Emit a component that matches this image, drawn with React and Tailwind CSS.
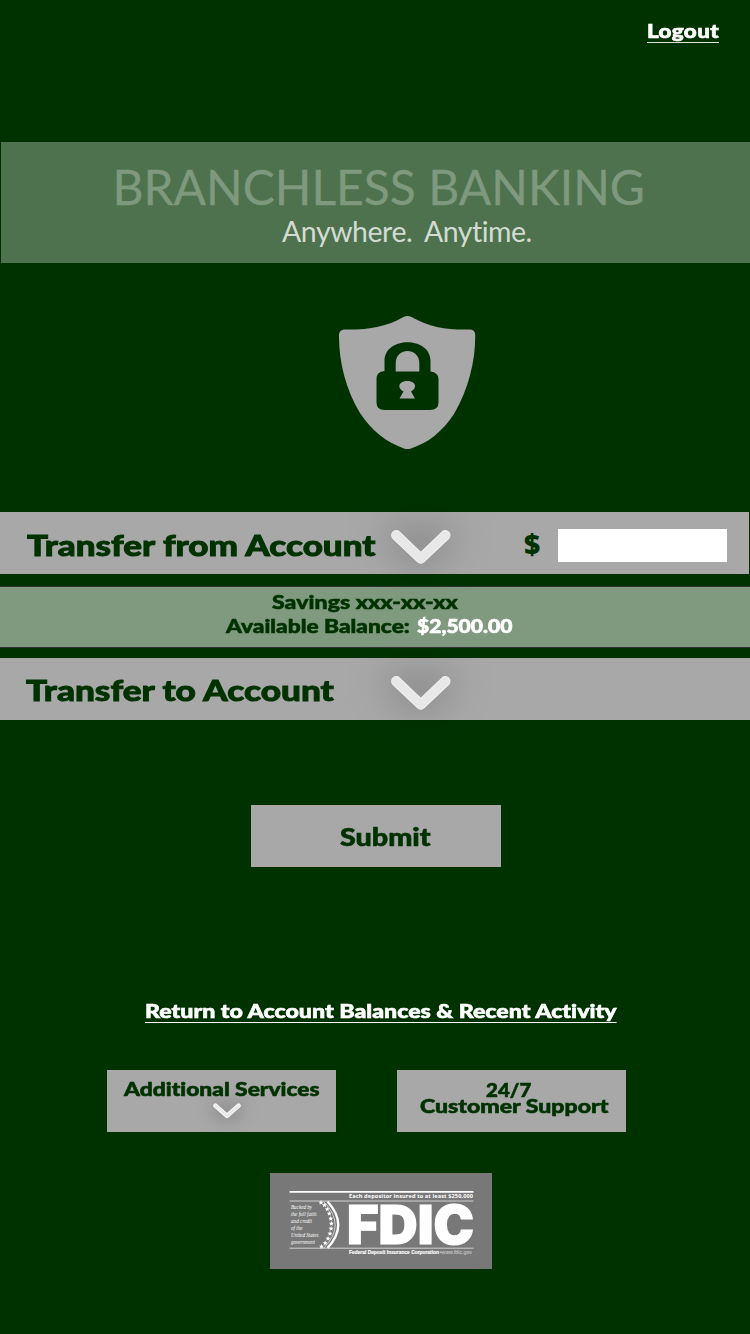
import React from 'react';

function Chevron({ className, small }) {
  return small ? (
    <svg className={className} viewBox="0 0 28 16" fill="none" strokeLinecap="round" strokeLinejoin="round">
      <path d="M2.4 2.6L14 12.9L25.6 2.6" stroke="#fafafa" strokeWidth="4.4" />
      <path d="M2.4 2.6L14 12.9L25.6 2.6" stroke="#e8e8e8" strokeWidth="2.4" />
    </svg>
  ) : (
    <svg className={className} viewBox="0 0 60 34" fill="none" strokeLinecap="round" strokeLinejoin="round">
      <path d="M5.2 5.2L29.8 28.6L54.4 5.2" stroke="#f3f3f3" strokeWidth="10.2" />
      <path d="M5.2 5.2L29.8 28.6L54.4 5.2" stroke="#e8e8e8" strokeWidth="8.6" />
    </svg>
  );
}

function Shield() {
  return (
    <svg className="ml-[339px] h-[134px] w-[137px]" viewBox="0 0 137 134">
      <path fill="#a8a8a8" d="M64.5 1Q68.5-1 72.5 1C91 11.5 108 14 131.5 13.5Q136.2 14 136.2 19C136.5 44 130 72 115 98C103 116 89 127 72 132.4Q68.5 133.6 65 132.4C47 126 33 115 21 97C6 72-.3 44 0 18.5Q.5 14 5 13.5C29 14 47 11 64.5 1Z" />
      <path fill="#003200" d="M45.5 55V45C45.5 20 91.5 20 91.5 45V55.5Q99.5 56.5 99.5 63V86.5Q99.5 94 91 94H45.5Q37.5 94 37.5 86.5V63Q37.5 55.5 45.5 55Z" />
      <path fill="#a8a8a8" d="M56.7 55.5V47C56.7 31 80.3 31 80.3 47V55.5Z" />
      <path fill="#a8a8a8" d="M64.5 75.5C57.5 71.5 60 65 68.2 65C76.5 65 79 71.5 72 75.5L76 82.5H60.5Z" />
    </svg>
  );
}

const stars = [
  [51, 29.5], [54.5, 32], [57.3, 36], [59.3, 40.5], [60.8, 45.5], [61.4, 50.5],
  [61.1, 55.5], [60, 60.5], [58, 65.5], [55.2, 70], [51.5, 73.5],
];
const motto = [
  ['Backed by', 35.5, 21], ['the full faith', 42.7, 25.5], ['and credit', 49.8, 21],
  ['of the', 57, 11.5], ['United States', 64, 27.5], ['government', 71.2, 24],
];

function Fdic() {
  return (
    <svg className="ml-[270px] block h-24 w-[222px] bg-[#787878] font-normal" viewBox="0 0 222 96" fill="#fff">
      <path d="M19.5 18.8H203.5" stroke="#fff" strokeWidth="1.7" />
      <path d="M19.5 28H203.5M19.5 75.2H203.5" stroke="#d0d0d0" strokeWidth="1" />
      <text x="79" y="24.8" fontSize="5.6" fontWeight="700" textLength="124" className="font-['Open_Sans',sans-serif]">Each depositor insured to at least $250,000</text>
      <g className="font-['Liberation_Serif',serif]" fontStyle="italic" fontSize="6.3">
        {motto.map(([t, y, w]) => <text key={t} x="21" y={y} textLength={w} lengthAdjust="spacingAndGlyphs">{t}</text>)}
      </g>
      <path d="M57.5 28.5Q79 52 57.5 75" fill="none" stroke="#fff" strokeWidth="2.3" />
      <path d="M53.8 28.5Q76.5 52 53.8 75" fill="none" stroke="#e5e5e5" strokeWidth=".8" />
      {stars.map(([x, y]) => (
        <path key={y} transform={`translate(${x} ${y})`} d="M0-2.5L.7-.8L2.5-.7L1.1.5L1.6 2.2L0 1.2L-1.6 2.2L-1.1.5L-2.5-.7L-.7-.8Z" />
      ))}
      <text x="77" y="71" fontSize="53" fontWeight="900" textLength="127" lengthAdjust="spacingAndGlyphs" stroke="#fff" strokeWidth="1.2" className="font-[Inter,sans-serif]">FDIC</text>
      <text x="79" y="81.4" fontSize="5.2" fontWeight="700" textLength="90" lengthAdjust="spacingAndGlyphs" stroke="#fff" strokeWidth=".15" className="font-['Liberation_Sans',sans-serif]">Federal Deposit Insurance Corporation</text>
      <text x="169.5" y="81.4" fontSize="5.2" fill="#d8d8d8" textLength="32.5" lengthAdjust="spacingAndGlyphs" className="font-['Liberation_Sans',sans-serif]">•www.fdic.gov</text>
    </svg>
  );
}

export default function App() {
  return (
    <div className="h-[1334px] w-[750px] overflow-hidden bg-[#003200] font-['Lato',sans-serif] text-[19.5px] leading-6 font-black whitespace-nowrap text-[#003200] [-webkit-text-stroke:0.6px] [font-variant-ligatures:none]">
      <header className="h-[142px] pt-[19px] pl-[646.5px]">
        <a className="inline-block origin-left scale-x-[1.18] text-[19px] tracking-[0.3px] text-white underline decoration-[#dbe3db] decoration-[1px] underline-offset-[4px] [text-decoration-skip-ink:none]">Logout</a>
      </header>

      <section className="ml-px h-[121px] bg-[#4d724d] pt-[21px] font-normal [-webkit-text-stroke:0px]">
        <h1 className="pl-[111.5px] text-[48px] leading-[48px] text-[#7f997f] [-webkit-text-stroke:0.3px]">BRANCHLESS BANKING</h1>
        <p className="mt-[3.5px] flex pl-[281px] text-[28.5px] leading-8 text-[#d3dcd3]">
          <span className="w-[142px] tracking-[-0.45px]">Anywhere.</span>
          <span className="tracking-[-0.5px]">Anytime.</span>
        </p>
      </section>

      <div className="h-[249px] pt-[53px]"><Shield /></div>

      <div className="relative flex h-[62px] w-[749px] bg-[#a8a8a8]">
        <div className="w-[363px] pt-[13px] pl-[27px] text-[28.5px] leading-10 [-webkit-text-stroke:0.9px]"><span className="inline-block origin-left scale-x-[1.229]">Transfer from Account</span></div>
        <Chevron className="mt-[18px] ml-7 h-[34px] w-[60px] drop-shadow-[-1px_-3px_20px_rgba(0,0,0,0.5)]" />
        <span className="ml-[73px] w-[34px] pt-3 font-['Open_Sans',sans-serif] text-[28px] leading-10 font-extrabold [-webkit-text-stroke:0px]">$</span>
        <input className="mt-[17px] h-[33px] w-[169px] bg-white px-2 outline-none" aria-label="Amount" />
      </div>

      <div className="mt-3 h-[62px] border-y border-[#333333] bg-[#809a80] pt-[2.5px]">
        <p className="pl-[272px]"><span className="inline-block origin-left scale-x-[1.18] tracking-[0.06px]">Savings xxx-xx-xx</span></p>
        <p className="flex pl-[226px]">
          <span className="w-[190.5px]"><span className="inline-block origin-left scale-x-[1.165]">Available Balance:</span></span>
          <span className="origin-left scale-x-[1.08] text-white">$2,500.00</span>
        </p>
      </div>

      <div className="mt-2.5 flex h-[62px] bg-[#a8a8a8]">
        <div className="w-[363px] pt-3 pl-[26px] text-[28.5px] leading-10 [-webkit-text-stroke:0.9px]"><span className="inline-block origin-left scale-x-[1.234]">Transfer to Account</span></div>
        <Chevron className="mt-[18px] ml-7 h-[34px] w-[60px] drop-shadow-[-1px_-3px_20px_rgba(0,0,0,0.5)]" />
      </div>

      <button className="mt-[85px] ml-[251px] block h-[62px] w-[250px] bg-[#a8a8a8] pt-px pl-[89px] text-left text-[24px] leading-[61px]"><span className="inline-block origin-left scale-x-[1.195]">Submit</span></button>

      <div className="mt-[132px] h-[71px] pl-[145px]">
        <a className="inline-block origin-left scale-x-[1.188] text-white underline decoration-[1px] underline-offset-[4px] [text-decoration-skip-ink:none]">Return to Account Balances &amp; Recent Activity</a>
      </div>

      <div className="flex gap-[61px] pl-[107px]">
        <button className="flex h-[62px] w-[229px] flex-col items-start bg-[#a8a8a8] pt-[7px] pl-[17px]">
          <span className="origin-left scale-x-[1.168]">Additional Services</span>
          <Chevron small className="mt-0.5 ml-[89px] h-4 w-7 drop-shadow-[0_0_9px_rgba(0,0,0,0.5)]" />
        </button>
        <button className="flex h-[62px] w-[229px] flex-col items-start bg-[#a8a8a8] pt-3 leading-4">
          <span className="ml-[89px] origin-left scale-x-[1.05]">24/7</span>
          <span className="ml-[22.5px] origin-left scale-x-[1.183]">Customer Support</span>
        </button>
      </div>

      <div className="mt-[41px]"><Fdic /></div>
    </div>
  );
}
